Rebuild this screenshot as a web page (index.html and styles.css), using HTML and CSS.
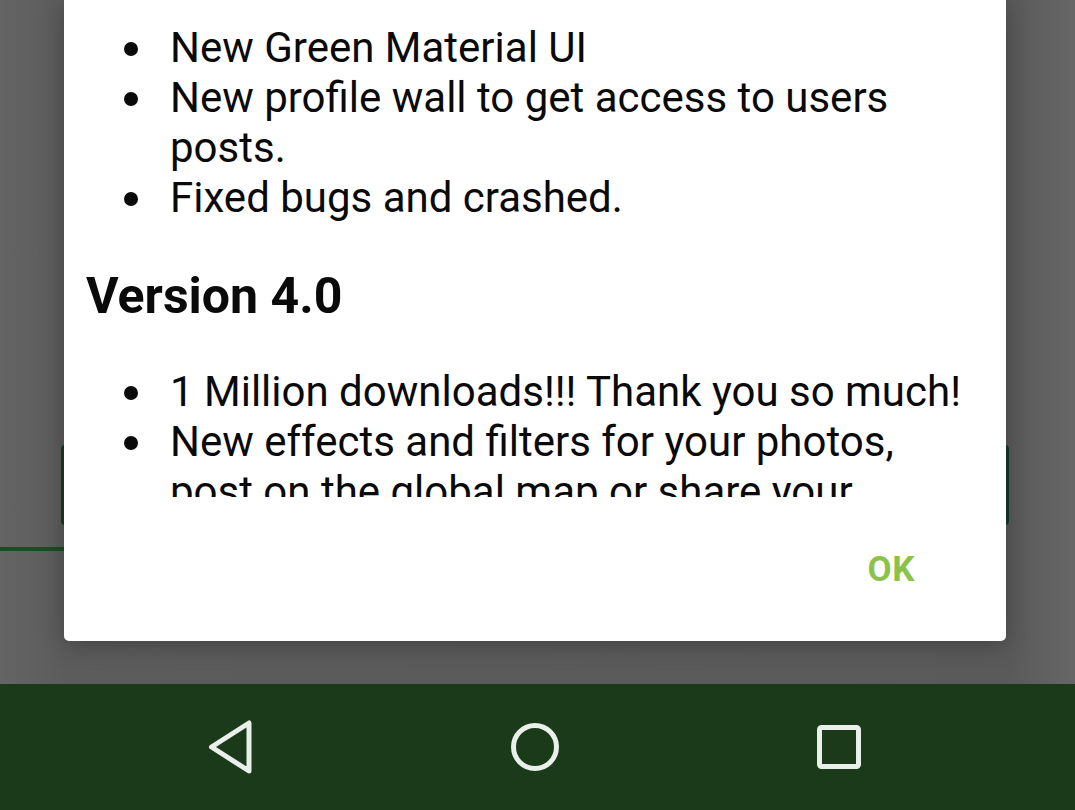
FILE: index.html
```html
<!DOCTYPE html>
<html>
<head>
<meta charset="utf-8">
<link rel="stylesheet" href="styles.css">
</head>
<body>
<div class="screen">
  <div class="app">
    <div class="app-bg">
      <div class="app-button"></div>
      <div class="app-line"></div>
    </div>
    <div class="dialog">
      <div class="scroll">
        <ul class="list first">
          <li>New Green Material UI</li>
          <li>New profile wall to get access to users posts.</li>
          <li>Fixed bugs and crashed.</li>
        </ul>
        <h2 class="version">Version 4.0</h2>
        <ul class="list">
          <li>1 Million downloads!!! Thank you so much!</li>
          <li>New effects and filters for your photos, post on the global map or share your</li>
        </ul>
      </div>
      <div class="actions">
        <span class="ok">OK</span>
      </div>
    </div>
  </div>
  <nav class="navbar">
    <svg class="nav-icon" width="56" height="56" viewBox="0 0 56 56">
      <path d="M46 4 L46 52 L8.5 28 Z" fill="none" stroke="#e9efe9" stroke-width="5" stroke-linejoin="round"/>
    </svg>
    <svg class="nav-icon" width="56" height="56" viewBox="0 0 56 56">
      <circle cx="28" cy="28" r="21.5" fill="none" stroke="#e9efe9" stroke-width="5"/>
    </svg>
    <svg class="nav-icon" width="56" height="56" viewBox="0 0 56 56">
      <rect x="8.5" y="8.5" width="39" height="39" rx="2" fill="none" stroke="#e9efe9" stroke-width="5"/>
    </svg>
  </nav>
</div>
</body>
</html>
```
FILE: styles.css
```css
html, body {
  margin: 0;
  padding: 0;
}
body {
  width: 1075px;
  height: 810px;
  overflow: hidden;
  font-family: Roboto, "Noto Sans", "Liberation Sans", sans-serif;
  background: #5f5f5f;
}
.screen {
  display: flex;
  flex-direction: column;
  width: 1075px;
  height: 810px;
}
.app {
  position: relative;
  height: 684px;
  background: linear-gradient(to right, #646464 0%, #5c5c5c 6%, #5a5a5a 94%, #666666 100%);
}
.app-bg {
  padding-top: 445px;
}
.app-button {
  margin-left: 61px;
  width: 948px;
  height: 80px;
  border-radius: 4px;
  background: linear-gradient(to right, #1b3c20, #123a30);
}
.app-line {
  margin-top: 22px;
  width: 80px;
  height: 4px;
  background: #1f4b23;
}
.dialog {
  position: absolute;
  left: 64px;
  top: 0;
  width: 942px;
  height: 641px;
  background: #ffffff;
  border-radius: 0 0 5px 5px;
  box-shadow: 0 4px 24px rgba(0, 0, 0, 0.28);
  display: flex;
  flex-direction: column;
}
.scroll {
  height: 497px;
  overflow: hidden;
  padding: 23px 36px 0 22px;
  box-sizing: border-box;
  color: #0a0a0a;
}
.list {
  list-style: none;
  margin: 0;
  padding: 0;
}
.list li {
  display: flex;
  font-size: 42px;
  line-height: 50px;
}
.list li::before {
  content: "";
  flex: 0 0 14px;
  width: 14px;
  height: 14px;
  border-radius: 50%;
  background: #0a0a0a;
  margin: 19px 32px 0 38px;
}
.version {
  margin: 43px 0 41px 0;
  font-size: 50px;
  line-height: 60px;
  font-weight: 700;
  color: #0a0a0a;
}
.actions {
  flex: 1;
  display: flex;
  align-items: center;
  justify-content: flex-end;
  padding-right: 91px;
}
.ok {
  font-size: 35px;
  font-weight: 700;
  color: #8bc34a;
  letter-spacing: 0.5px;
}
.navbar {
  height: 126px;
  background: #1a3a1a;
  display: flex;
  align-items: center;
  justify-content: center;
  gap: 248px;
  padding-right: 5px;
}
.nav-icon {
  display: block;
}
```
